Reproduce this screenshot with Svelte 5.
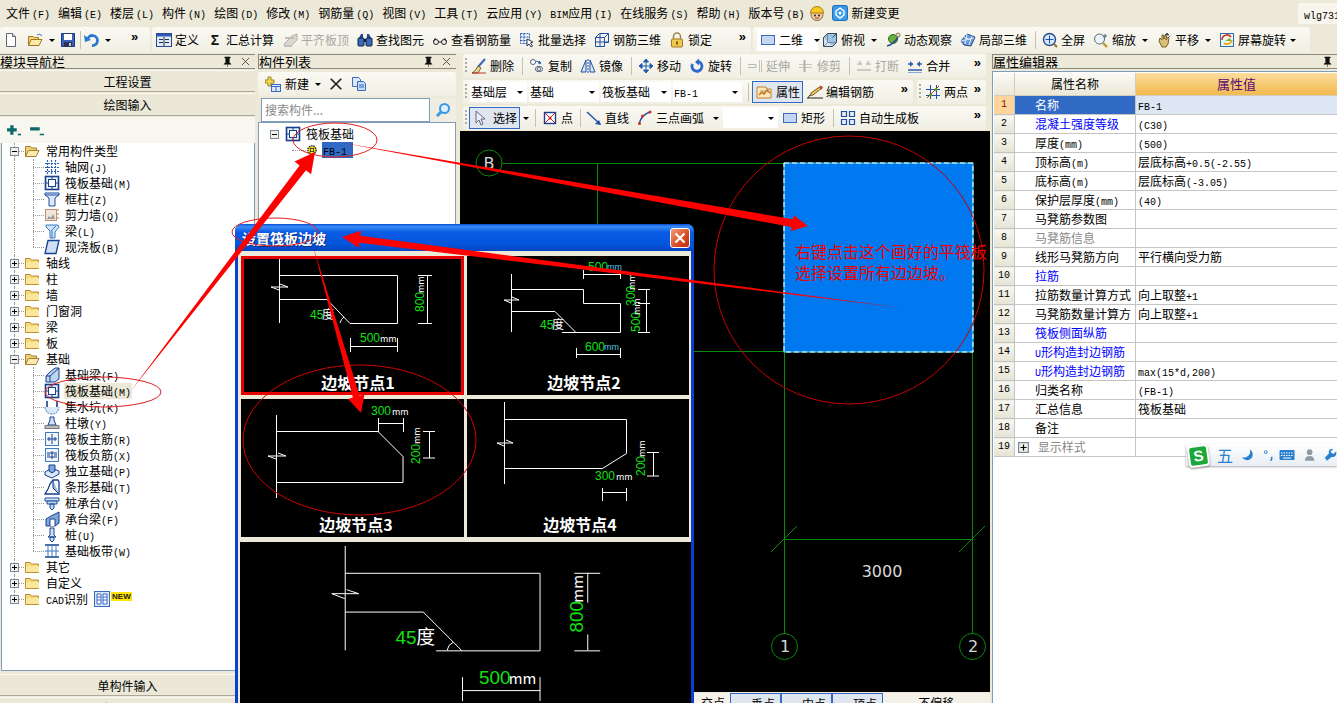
<script>
  // icones de la barre d'outils et de l'arbre, viewBox 16x16
  const blue = 'stroke="#1b4f9c"';
  const icons = {
    new: `<path d="M3.5 1.5h6l3 3v10h-9z" fill="#fff" stroke="#667"/><path d="M9.5 1.5v3h3" fill="#dde" stroke="#667"/>`,
    open: `<path d="M1.5 13.5v-9h5l1 1h4v2" fill="#f7d774" stroke="#a07820"/><path d="M1.5 13.5l2.5-6h11l-3 6z" fill="#fbe9a6" stroke="#a07820"/><path d="M10 3q3-2 5 1" fill="none" stroke="#3a70c0"/>`,
    save: `<rect x="1.5" y="1.5" width="13" height="13" fill="#3a5fc0" stroke="#223a80"/><rect x="4" y="2" width="8" height="6" fill="#fff"/><rect x="4" y="10" width="8" height="4.5" fill="#2b3350"/><rect x="9" y="11" width="2" height="3" fill="#ccd"/>`,
    undo: `<path d="M4.5 8A5 5 0 1 1 9 13.5" stroke="#2a78d0" stroke-width="2.8" fill="none"/><path d="M1 3l1 7 6-2z" fill="#2a78d0"/>`,
    define: `<rect x=".5" y="1.5" width="15" height="13" fill="#dfe9f7" stroke="#2a4a90"/><rect x="1" y="2" width="14" height="2.5" fill="#2a5ab0"/><path d="M3 7.5h4M3 10.5h4M9 7.5h4M9 10.5h4M8 5v9" stroke="#234"/>`,
    sigma: `<text x="8" y="13" text-anchor="middle" font-size="14" font-weight="bold" font-family="Liberation Sans" fill="#111">Σ</text>`,
    align: `<path d="M2 12l8-8 5-2v6l-6 6H3z" fill="#d8d8d0" stroke="#b0b0a8"/><path d="M3 6h9M2 14h8" stroke="#c0c0b8" stroke-width="2"/>`,
    binoc: `<path d="M2 6l2-4h2v4zM14 6l-2-4h-2v4z" fill="#20489a"/><rect x="1" y="6" width="6" height="8" rx="1" fill="#3a6ac0" stroke="#123"/><rect x="9" y="6" width="6" height="8" rx="1" fill="#3a6ac0" stroke="#123"/><rect x="7" y="7" width="2" height="3" fill="#123"/>`,
    glass: `<circle cx="4" cy="10" r="2.5" fill="#eee" stroke="#222"/><circle cx="12" cy="10" r="2.5" fill="#eee" stroke="#222"/><path d="M6.5 10h3M1.5 9l2-3M14.5 9l-2-3" stroke="#222" fill="none"/>`,
    batch: `<path d="M1.5 1.5h9v10h-9zM1.5 5h9M1.5 8.5h9M5 1.5v10" fill="#eef3fb" stroke="#2a5fb0" stroke-dasharray="2 1"/><path d="M8 7l6 3-2.5 1 2 3-1.5 1-2-3-2 2z" fill="#fff" stroke="#335"/>`,
    r3d: `<path d="M1.5 5.5h9v9h-9zM5.5 1.5h9v9h-4M1.5 5.5l4-4M10.5 5.5l4-4M6 1.5v13M1.5 10h13" fill="none" stroke="#1f4fa8"/>`,
    lock: `<path d="M4.5 7V4.5a3.5 3.5 0 0 1 7 0V7" fill="none" stroke="#9a8a50" stroke-width="1.5"/><rect x="2.5" y="7" width="11" height="8" rx="1" fill="#f0c850" stroke="#a07820"/><rect x="7" y="9.5" width="2" height="3" fill="#7a5a10"/>`,
    box2d: `<rect x="1.5" y="3.5" width="13" height="9" fill="#c4d6f4" stroke="#3a6ac0"/>`,
    cube: `<path d="M1.5 5.5h9v9h-9z" fill="#d4e8f6" stroke="#345"/><path d="M1.5 5.5l4-4h9v9l-4 4M10.5 5.5l4-4" fill="#9cc4e4" stroke="#345"/><path d="M1.5 14.5l4-4h9M5.5 1.5v9" fill="none" stroke="#789"/>`,
    orbit: `<circle cx="8" cy="7" r="4.5" fill="#6ab040" stroke="#2e6a1c"/><path d="M2 14q4-1 6-3 4-3 6-8" fill="none" stroke="#2a4a90" stroke-width="1.6"/><circle cx="13" cy="3" r="2" fill="#e9e3b0" stroke="#876"/>`,
    gem: `<path d="M1 9l6-7 8 3-4 9-7-1z" fill="#6a9ad8" stroke="#274a8c"/><path d="M4 5l7 3M7 2l-2 10M12 4L9 13M1 9l13-3" fill="none" stroke="#dce8f8"/>`,
    zoomall: `<circle cx="7.5" cy="7.5" r="6" fill="#dbe8f8" stroke="#234a8a" stroke-width="1.4"/><path d="M7.5 3.5v8M3.5 7.5h8" stroke="#1b4fc0"/><path d="M12 12l3 3" stroke="#987020" stroke-width="2"/>`,
    zoom: `<circle cx="6.5" cy="7" r="5" fill="#eef4fb" stroke="#567"/><path d="M10 11l4 4" stroke="#c09830" stroke-width="2.4"/><path d="M12 2v4M10 4h4" stroke="#467"/>`,
    pan: `<path d="M3 9l1-3 2 2V3l1.500 0 .5 4 1-4 1.500.5L10 8l2-3 1 1-1 6-2 3H6z" fill="#d8c078" stroke="#7a6020"/><path d="M11 1l2 2h-4zM14 4l-2 2" fill="#456" stroke="#456"/>`,
    spin: `<rect x="1.500" y="1.500" width="13" height="13" fill="#ecf6ea" stroke="#2a70b0"/><path d="M3 8a5 5 0 0 1 9-3" fill="none" stroke="#e03020" stroke-width="1.6"/><path d="M13 8a5 5 0 0 1-8 3" fill="none" stroke="#f0a020" stroke-width="1.6"/><path d="M6 9l5-3 1 3z" fill="#6ab040"/>`,
    broom: `<path d="M14 1L7 9" stroke="#3a6ac0" stroke-width="2"/><path d="M7 8l3 2-3 5H1q4-2 6-7z" fill="#e8d898" stroke="#7a6020"/><path d="M1 15h14" stroke="#c03020"/>`,
    copy: `<circle cx="4" cy="4" r="2.500" fill="#fff" stroke="#567"/><circle cx="11" cy="11" r="2.500" fill="#fff" stroke="#567"/><circle cx="9" cy="11" r="2.500" fill="none" stroke="#567"/><path d="M7 3l5 2M12 5l-2-2v3z" stroke="#2a5fb0" fill="#2a5fb0"/>`,
    mirror: `<path d="M6 2v12H1zM10 2v12h5z" fill="#dbe8f8" stroke="#1f4fa8"/><path d="M8 1v14" stroke="#1f4fa8" stroke-dasharray="2 1"/>`,
    move: `<path d="M8 1l2.500 3h-5zM8 15l2.500-3h-5zM1 8l3-2.500v5zM15 8l-3-2.500v5zM8 4v8M4 8h8" fill="#1f5fb0" stroke="#1f5fb0"/>`,
    rot: `<path d="M3.500 6a5 5 0 1 0 6-2.500" fill="none" stroke="#2a6ad0" stroke-width="2.800"/><path d="M10 .5v7l-4-3.500z" fill="#2a6ad0"/>`,
    ext: `<path d="M1 6.500h8M1 9.500h8M9 6.500v3" fill="none" stroke="#b8b8b0"/><path d="M12.500 2v12M14.500 2v12" stroke="#c4c4bc"/>`,
    trim: `<path d="M1 6.500h13M1 9.500h13" fill="none" stroke="#c4c4bc"/><path d="M6.500 2v12" stroke="#b0b0a8" stroke-width="2"/>`,
    brk: `<path d="M1 6h5M10 6h5M1 12h14M3 3l2 2M13 3l-2 2" stroke="#c0c0b8" stroke-width="1.400" fill="none"/>`,
    merge: `<path d="M1 6h5M10 6h5M1 12h14" stroke="#2a5fb0" stroke-width="1.400"/><path d="M6 6L3 3v6zM10 6l3-3v6z" fill="#2a5fb0"/><path d="M1 14.500h14" stroke="#8aa8d8"/>`,
    attr: `<path d="M1 3h9l1 2h4v9H1z" fill="#f9e9bc" stroke="#c08030"/><path d="M3 11l3-3 2 2 3-4 3 3" fill="none" stroke="#d07010" stroke-width="1.500"/><path d="M4 7h9" stroke="#a8a070"/>`,
    pen: `<path d="M14 2l1.500 1.500L6 11l-2.500.5L4 9z" fill="#f0c860" stroke="#7a5a20"/><path d="M13 3l2 2" stroke="#d04030" stroke-width="2"/><path d="M0 14h16M3 11l-2 3" stroke="#222"/>`,
    two: `<path d="M1 5.500h14M1 11.500h14M5.500 1v14M11.500 1v14" stroke="#1f4fa8" fill="none"/><path d="M2 14L14 2" stroke="#d03020"/><circle cx="5.500" cy="11" r="1.600" fill="#5a9a20"/><circle cx="11" cy="5.500" r="1.600" fill="#5a9a20"/>`,
    cursor: `<path d="M3 1v12l3-3 2 5 2-1-2-5h4z" fill="#e8eef8" stroke="#667"/>`,
    point: `<rect x="2.500" y="2.500" width="11" height="11" fill="#fff" stroke="#1b3f90" stroke-width="1.400"/><path d="M3 3l10 10M13 3L3 13" stroke="#d02020"/><circle cx="8" cy="8" r="1.500" fill="#d02020"/>`,
    line: `<path d="M1 2l13 12" stroke="#1f4fa8" stroke-width="1.400"/><path d="M15 15l-6-1 4-4z" fill="#1f4fa8"/>`,
    arc: `<path d="M2 14Q4 5 13 2" fill="none" stroke="#1f4fa8" stroke-width="1.400"/><circle cx="2.500" cy="13.500" r="1.500" fill="#d03020"/><circle cx="5.500" cy="6" r="1.500" fill="#d03020"/><circle cx="13" cy="2" r="1.500" fill="#d03020"/>`,
    auto: `<path d="M1.500 1.500h5v5h-5zM9.500 1.500h5v5h-5zM1.500 9.500h5v5h-5zM9.500 9.500h5v5h-5z" fill="#e4ecf8" stroke="#1f4fa8" stroke-width="1.200"/>`,
    plusnew: `<path d="M3 1h3v3h3v3H6v3H3V7H0V4h3z" fill="#f5d850" stroke="#9a8a20"/><rect x="6.500" y="8.500" width="9" height="7" fill="#dde8f8" stroke="#3a6ac0"/><path d="M6.500 10.500h9M11 10.500v5" stroke="#3a6ac0"/>`,
    cross: `<path d="M2 2l12 12M14 2L2 14" stroke="#222" stroke-width="2"/>`,
    docs: `<path d="M1.500 1.500h6l2 2v7h-8z" fill="#dde8f8" stroke="#3a6ac0"/><path d="M6.500 5.500h6l2 2v7h-8z" fill="#c8dcf6" stroke="#3a6ac0"/><path d="M8 9h5M8 11h5" stroke="#3a6ac0"/>`,
    find: `<circle cx="9.500" cy="6.500" r="4.500" fill="#dcefff" stroke="#3a98e0" stroke-width="2"/><path d="M6 10l-4 4" stroke="#3a98e0" stroke-width="3"/>`,
    gear: `<circle cx="8" cy="8" r="5.500" fill="#f8f020" stroke="#333" stroke-dasharray="2 1" stroke-width="2"/><path d="M5 6h6M5 10h6M6 5v6M10 5v6" stroke="#222"/>`,
    fold: `<path d="M1.500 13.500v-10h5l1 1.500h7v8.500z" fill="#f8d878" stroke="#b89030"/><path d="M2 7h13v6H2z" fill="#fbe69e"/>`,
    foldo: `<path d="M1.500 13.500v-10h5l1 1.500h5v2" fill="#f0d070" stroke="#a08030"/><path d="M1.500 13.500l3-6H15l-3 6z" fill="#fbeab0" stroke="#a08030"/>`,
    grid: `<path d="M1 4.500h14M1 8.500h14M1 12.500h14M3.500 1v14M7.500 1v14M11.500 1v14" fill="none" stroke="#2a5fb0" stroke-dasharray="2 1" stroke-width="1.200"/>`,
    raft: `<rect x="1.500" y="1.500" width="13" height="13" fill="#eef3fb" stroke="#15408c" stroke-width="1.600"/><rect x="4.500" y="4.500" width="7" height="7" fill="#fff" stroke="#15408c"/><path d="M1 8h3M12 8h3M8 1v3M8 12v3" stroke="#15408c"/>`,
    column: `<path d="M1 2h14v2l-4 3v8H5V7L1 4z" fill="#dbe8f8" ${blue}/><path d="M1 4h14" ${blue}/>`,
    wall: `<rect x="1.500" y="2.500" width="11" height="11" fill="#eee6de" stroke="#c09070"/><path d="M3 12l2-3 2 2 2-4 2 5z" fill="#999"/><path d="M14 2v12" stroke="#d07030" stroke-dasharray="2 2"/>`,
    beam: `<path d="M2 2h12l1 2-4 5v6H6V8L2 4z" fill="#cfe4f8" stroke="#3a7ac0"/><path d="M7 8l5-5M8 15V8" stroke="#3a7ac0"/>`,
    slab: `<path d="M4 1.500h11l-3 13H1z" fill="#cfe0f6" stroke="#15408c" stroke-width="1.300"/>`,
    fbeam: `<path d="M2 15V9l4-4 5-4h4v11l-4 3z" fill="#bcd4f0" stroke="#15408c"/><path d="M6 15V9l9-8M2 9h4" stroke="#15408c" fill="none"/>`,
    pit: `<path d="M3 2v5q0 4 5 4t5-4V2" fill="none" stroke="#15408c" stroke-width="1.600"/><path d="M1 8q1 7 7 7t7-7" fill="#dce8f6" stroke="#3a7ac0" stroke-dasharray="2 1"/>`,
    pier: `<path d="M6 2h4v3l2 5H4l2-5z" fill="#cfe0f6" stroke="#15408c"/><rect x="1" y="10.500" width="14" height="3" fill="#bbb" stroke="#778"/>`,
    rbar: `<rect x="1.500" y="1.500" width="13" height="13" fill="#f2f6fc" stroke="#3a7ac0"/><path d="M3 8h10M8 3v10M5 6v4M11 6v4" stroke="#15408c"/>`,
    nbar: `<rect x="1.500" y="1.500" width="13" height="13" fill="#f2f6fc" stroke="#3a7ac0"/><path d="M3 6h10M3 10h10M8 4v8M3 8h3M10 8h3" stroke="#15408c"/>`,
    iso: `<path d="M1 9l7-4 7 3v3l-7 4-7-3z" fill="#dce8f6" stroke="#15408c"/><path d="M5 2h6v6l-3 2-3-2z" fill="#7ea6d8" stroke="#15408c"/>`,
    strip: `<path d="M1 15l3-5 2-5 3-4h5l1 2v12z" fill="#fff" stroke="#15408c" stroke-width="1.300"/><path d="M9 1v8l6 6" fill="#9cbce4" stroke="#15408c"/>`,
    cap: `<path d="M1 3h14v3H1z" fill="#dbe8f8" ${blue}/><path d="M3 6h10v3H3zM6 9h4v4l-2 2-2-2z" fill="#bcd4f0" ${blue}/>`,
    cbeam: `<path d="M2 15V8l5-3 8-4v11l-4 3z" fill="#7ea6d8" stroke="#15408c"/><path d="M6 15V8h5v7" fill="#fff" stroke="#15408c"/>`,
    pile: `<path d="M6 1h4v7l2 2H4l2-2zM6 10h4v3l-2 2-2-2z" fill="#cfe0f6" stroke="#15408c"/>`,
    band: `<path d="M1 2h14M1 14h14" stroke="#15408c" stroke-width="1.400"/><path d="M4 2v12M8 2v12M12 2v12M1 8h14" stroke="#3a7ac0"/>`,
    cad: `<rect x=".5" y=".5" width="15" height="15" fill="#dbe8f8" stroke="#3a6ac0"/><path d="M3 3h4v10H3zM9 3h4v10H9zM3 6h4M3 9h4M9 6h4M9 9h4" fill="#fff" stroke="#3a6ac0"/>`,
    hat: `<circle cx="8" cy="9.500" r="6" fill="#f3c7a0" stroke="#8a6a40"/><path d="M1.500 8a6.500 6.500 0 0 1 13 0z" fill="#f8c820" stroke="#a88010"/><circle cx="6" cy="10.500" r="1" fill="#222"/><circle cx="10" cy="10.500" r="1" fill="#222"/><path d="M6 13h4" stroke="#a04030"/>`,
    change: `<rect x=".5" y=".5" width="15" height="15" rx="2" fill="#3a9ae8" stroke="#1a70c0"/><path d="M8 3l4 3v4l-4 3-4-3V6z" fill="none" stroke="#fff" stroke-width="1.400"/><circle cx="8" cy="8" r="1.500" fill="#fff"/>`,
  };

  const menu = [['文件', 'F'], ['编辑', 'E'], ['楼层', 'L'], ['构件', 'N'], ['绘图', 'D'], ['修改', 'M'], ['钢筋量', 'Q'], ['视图', 'V'], ['工具', 'T'], ['云应用', 'Y'], ['BIM应用', 'I'], ['在线服务', 'S'], ['帮助', 'H'], ['版本号', 'B']];

  const mainTools = [
    { i: 'define', t: '定义' }, { i: 'sigma', t: '汇总计算' }, { i: 'align', t: '平齐板顶', off: 1 },
    { i: 'binoc', t: '查找图元' }, { i: 'glass', t: '查看钢筋量' }, { i: 'batch', t: '批量选择' },
    { i: 'r3d', t: '钢筋三维' }, { i: 'lock', t: '锁定' },
  ];
  const viewTools = [
    { i: 'cube', t: '俯视', arr: 1 }, { i: 'orbit', t: '动态观察' }, { i: 'gem', t: '局部三维' }, { sep: 1 },
    { i: 'zoomall', t: '全屏' }, { i: 'zoom', t: '缩放', arr: 1 }, { i: 'pan', t: '平移', arr: 1 }, { i: 'spin', t: '屏幕旋转', arr: 2 },
  ];
  const editTools = [
    { i: 'broom', t: '删除' }, { sep: 1 }, { i: 'copy', t: '复制' }, { i: 'mirror', t: '镜像' }, { sep: 1 },
    { i: 'move', t: '移动' }, { i: 'rot', t: '旋转' }, { sep: 1 }, { i: 'ext', t: '延伸', off: 1 }, { i: 'trim', t: '修剪', off: 1 }, { sep: 1 },
    { i: 'brk', t: '打断', off: 1 }, { i: 'merge', t: '合并' },
  ];
  const combos = [['基础层', 57], ['基础', 70], ['筏板基础', 70], ['FB-1', 69]];

  const tree = [
    { t: '常用构件类型', i: 'foldo', open: 1 },
    { t: '轴网(J)', i: 'grid', sub: 1 }, { t: '筏板基础(M)', i: 'raft', sub: 1 }, { t: '框柱(Z)', i: 'column', sub: 1 },
    { t: '剪力墙(Q)', i: 'wall', sub: 1 }, { t: '梁(L)', i: 'beam', sub: 1 }, { t: '现浇板(B)', i: 'slab', sub: 1, end: 1 },
    { t: '轴线', i: 'fold' }, { t: '柱', i: 'fold' }, { t: '墙', i: 'fold' }, { t: '门窗洞', i: 'fold' }, { t: '梁', i: 'fold' }, { t: '板', i: 'fold' },
    { t: '基础', i: 'foldo', open: 1 },
    { t: '基础梁(F)', i: 'fbeam', sub: 1 }, { t: '筏板基础(M)', i: 'raft', sub: 1, sel: 1 }, { t: '集水坑(K)', i: 'pit', sub: 1 },
    { t: '柱墩(Y)', i: 'pier', sub: 1 }, { t: '筏板主筋(R)', i: 'rbar', sub: 1 }, { t: '筏板负筋(X)', i: 'nbar', sub: 1 },
    { t: '独立基础(P)', i: 'iso', sub: 1 }, { t: '条形基础(T)', i: 'strip', sub: 1 }, { t: '桩承台(V)', i: 'cap', sub: 1 },
    { t: '承台梁(F)', i: 'cbeam', sub: 1 }, { t: '桩(U)', i: 'pile', sub: 1 }, { t: '基础板带(W)', i: 'band', sub: 1, end: 1 },
    { t: '其它', i: 'fold' }, { t: '自定义', i: 'fold' }, { t: 'CAD识别', i: 'fold', cad: 1, last: 1 },
  ];

  const props = [
    ['名称', 'FB-1'], ['混凝土强度等级', '(C30)', 'b'], ['厚度(mm)', '(500)'], ['顶标高(m)', '层底标高+0.5(-2.55)'], ['底标高(m)', '层底标高(-3.05)'],
    ['保护层厚度(mm)', '(40)'], ['马凳筋参数图', ''], ['马凳筋信息', '', 'g'], ['线形马凳筋方向', '平行横向受力筋'], ['拉筋', '', 'b'],
    ['拉筋数量计算方式', '向上取整+1'], ['马凳筋数量计算方', '向上取整+1'], ['筏板侧面纵筋', '', 'b'], ['U形构造封边钢筋', '', 'b'],
    ['U形构造封边钢筋', 'max(15*d,200)', 'b'], ['归类名称', '(FB-1)'], ['汇总信息', '筏板基础'], ['备注', ''], ['显示样式', '', 'g'],
  ];

  // decoupe un libelle : les caracteres latins sont plus petits, comme dans l'original
  function runs(s) {
    return s.split(/([\x00-\x7f]+)/).filter(Boolean).map((p) => ({ s: p, lat: /^[\x00-\x7f]/.test(p) }));
  }

  // fleche rouge effilee, du point fin vers la pointe
  function arrow(x0, y0, x1, y1, w, hl, hw) {
    const len = Math.hypot(x1 - x0, y1 - y0);
    const ux = (x1 - x0) / len, uy = (y1 - y0) / len, nx = -uy, ny = ux;
    const bx = x1 - ux * hl, by = y1 - uy * hl;
    const pts = [
      [x0, y0], [bx + nx * w / 2, by + ny * w / 2], [bx + nx * hw / 2, by + ny * hw / 2], [x1, y1],
      [bx - nx * hw / 2, by - ny * hw / 2], [bx - nx * w / 2, by - ny * w / 2],
    ];
    return pts.map((p) => p[0].toFixed(1) + ',' + p[1].toFixed(1)).join(' ');
  }
  const arrows = [
    arrow(130, 392, 315, 152, 8, 20, 21),
    arrow(338, 142, 808, 226, 8, 16, 16),
    arrow(903, 308, 342, 237, 7, 18, 17),
    arrow(313, 246, 361, 413, 7, 17, 17),
  ];
</script>

{#snippet txt(s)}{#each runs(s) as p}{#if p.lat}<span class="lat">{p.s}</span>{:else}{p.s}{/if}{/each}{/snippet}

{#snippet icon(name)}
  <svg class="ic" viewBox="0 0 16 16">{@html icons[name]}</svg>
{/snippet}

{#snippet tool(it)}
  {#if it.sep}
    <i class="sep"></i>
  {:else}
    <div class="tool" class:off={it.off}>
      {@render icon(it.i)}
      <span>{it.t}</span>
      {#if it.arr}<i class="arr" class:near={it.arr === 2}></i>{/if}
    </div>
  {/if}
{/snippet}

{#snippet title(name)}
  <div class="title">
    <span>{name}</span>
    <svg class="pin" viewBox="0 0 10 12"><path d="M2 1h6v1H7v5l2 2H1l2-2V2H2zM5 9v3" fill="#111" stroke="#111" stroke-width=".6" /></svg>
    <svg class="x" viewBox="0 0 10 10"><path d="M1 1l8 8M9 1L1 9" stroke="#444" /></svg>
  </div>
{/snippet}

{#snippet toggle(open)}
  <svg class="tog" viewBox="0 0 9 9">
    <rect x=".5" y=".5" width="8" height="8" fill="#f2f0e6" stroke="#7b8a9a" />
    <path d={open ? 'M2 4.500h5' : 'M2 4.500h5M4.500 2v5'} stroke="#000" />
  </svg>
{/snippet}

<div class="app">
  <div class="menubar">
    {#each menu as m}
      <div class="menu">{@render txt(m[0])}<span class="lat key">({m[1]})</span></div>
    {/each}
    <svg class="ic hat" viewBox="0 0 16 16">{@html icons.hat}</svg>
    <svg class="ic chg" viewBox="0 0 16 16">{@html icons.change}</svg>
    <span class="chg-t">新建变更</span>
    <div class="user"><span class="lat">wlg731</span></div>
  </div>

  <div class="tb1">
    <div class="band b1">
      {@render icon('new')}
      {@render icon('open')}
      <i class="arr a-open"></i>
      {@render icon('save')}
      <i class="sep s-save"></i>
      {@render icon('undo')}
      <i class="arr a-undo"></i>
      <b class="more m1">»</b>
    </div>
    <div class="band b2">
      {#each mainTools as it}{@render tool(it)}{/each}
      <b class="more">»</b>
    </div>
    <div class="band b3">
      <div class="view2d">
        {@render icon('box2d')}
        <span>二维</span>
        <i class="arr"></i>
      </div>
      {#each viewTools as it}{@render tool(it)}{/each}
    </div>
  </div>

  <div class="main">
    <aside class="nav">
      {@render title('模块导航栏')}
      <div class="navbtn first">工程设置</div>
      <div class="navbtn">绘图输入</div>
      <div class="treetools">
        <svg viewBox="0 0 14 10" class="tt"><path d="M4 0h3v3h3v3H7v3H4V6H1V3h3z" fill="#0a6a6a" /><path d="M11 8h3v1.500h-3z" fill="#0a6a6a" /></svg>
        <svg viewBox="0 0 14 10" class="tt"><path d="M1 2h9v3H1zM10 8h4v1.500h-4z" fill="#0a6a6a" /></svg>
      </div>
      <div class="tree">
        {#each tree as r}
          <div class="row" class:sub={r.sub} class:end={r.end} class:last={r.last}>
            {#if !r.sub}
              {@render toggle(r.open)}
              <i class="dots d0"></i>
            {:else}
              <i class="dots d1"></i>
            {/if}
            <svg class="ic ti" viewBox="0 0 16 16">{@html icons[r.i]}</svg>
            <span class="rt" class:sel={r.sel}>{@render txt(r.t)}</span>
            {#if r.cad}
              <svg class="ic cadic" viewBox="0 0 16 16">{@html icons.cad}</svg>
              <b class="newtag">NEW</b>
            {/if}
          </div>
        {/each}
      </div>
      <div class="navbtn low">单构件输入</div>
      <div class="navbtn low">报表预览</div>
    </aside>

    <section class="list">
      {@render title('构件列表')}
      <div class="band listbar">
        {@render icon('plusnew')}
        <span class="lb-new">新建</span>
        <i class="arr"></i>
        <svg class="ic lb-x" viewBox="0 0 16 16">{@html icons.cross}</svg>
        <svg class="ic lb-c" viewBox="0 0 16 16">{@html icons.docs}</svg>
      </div>
      <div class="search">
        <div class="s-in">搜索构件...</div>
        <div class="s-btn">{@render icon('find')}</div>
      </div>
      <div class="ltree">
        <div class="lrow">
          {@render toggle(true)}
          <svg class="ic lt-f" viewBox="0 0 16 16">{@html icons.raft}</svg>
          <span class="lt-t">筏板基础</span>
        </div>
        <div class="lrow two">
          <i class="dots d2"></i>
          <svg class="ic lt-g" viewBox="0 0 16 16">{@html icons.gear}</svg>
          <span class="lt-s"><span class="lat">FB-1</span></span>
        </div>
      </div>
    </section>

    <section class="work">
      <div class="band wr">
        <i class="grip"></i>
        {#each editTools as it}{@render tool(it)}{/each}
        <b class="more right">»</b>
      </div>
      <div class="wrs">
        <div class="band wr w1">
          <i class="grip"></i>
          {#each combos as c}
            <div class="combo" style="width:{c[1]}px">
              <span class="combo-t">{@render txt(c[0])}</span>
              <i class="arr"></i>
            </div>
          {/each}
          <i class="sep s-combo"></i>
          <div class="tool hot">{@render icon('attr')}<span>属性</span></div>
          <div class="tool">{@render icon('pen')}<span>编辑钢筋</span></div>
          <b class="more right">»</b>
        </div>
        <div class="band wr w2">
          <i class="grip"></i>
          <div class="tool">{@render icon('two')}<span>两点</span></div>
          <b class="more right">»</b>
        </div>
      </div>
      <div class="band wr">
        <i class="grip"></i>
        <div class="tool hot sel-t">{@render icon('cursor')}<span>选择</span></div>
        <i class="arr a-sel"></i>
        <i class="sep s-sel"></i>
        <div class="tool">{@render icon('point')}<span>点</span></div>
        <i class="sep s-pt"></i>
        <div class="tool">{@render icon('line')}<span>直线</span></div>
        <div class="tool">{@render icon('arc')}<span>三点画弧</span><i class="arr"></i></div>
        <div class="combo c-blank"><span class="combo-t"></span><i class="arr"></i></div>
        <div class="tool">{@render icon('box2d')}<span>矩形</span></div>
        <i class="sep"></i>
        <div class="tool">{@render icon('auto')}<span>自动生成板</span></div>
        <b class="more right">»</b>
      </div>

      <div class="canvas">
        <svg viewBox="460 131 530 561" width="530" height="561">
          <g fill="none" stroke="#0a8a0a">
            <path d="M502 163.500H784M597.500 163V420M600 351.500H784M784.500 352V634M972.500 352V634M784 539.500H973M771 552l26-26M959 552l26-26" />
            <circle cx="489" cy="163" r="13" />
            <circle cx="784.500" cy="646.500" r="13" />
            <circle cx="972.500" cy="646.500" r="13" />
          </g>
          <rect x="784" y="163" width="189" height="189" fill="#0078f0" stroke="#40e0ff" />
          <rect x="784" y="163" width="189" height="189" fill="none" stroke="#fff" stroke-dasharray="5 3" />
          <g class="axis">
            <text x="489" y="169">B</text>
            <text x="785" y="652">1</text>
            <text x="973" y="652">2</text>
            <text x="882" y="577">3000</text>
          </g>
        </svg>
      </div>
      <div class="snapbar">
        <span class="sb-a">交点</span>
        <span class="sb-b">垂点</span>
        <span class="sb-b">中点</span>
        <span class="sb-b">顶点</span>
        <b class="more sb-m">»</b>
        <span class="sb-o">不偏移</span>
        <b class="more sb-m2">»</b>
      </div>
    </section>

    <section class="props">
      {@render title('属性编辑器')}
      <div class="pwrap">
        <table>
          <thead>
            <tr><th class="n"></th><th class="h">属性名称</th><th class="v">属性值</th></tr>
          </thead>
          <tbody>
            {#each props as p, i}
              <tr class:cur={i === 0}>
                <td class="n">{i + 1}</td>
                <td class="pn" class:blue={p[2] === 'b'} class:grey={p[2] === 'g'}>
                  {#if i === 18}<span class="plus">{@render toggle(false)}</span>{/if}
                  {@render txt(p[0])}
                </td>
                <td class="pv">{@render txt(p[1])}</td>
              </tr>
            {/each}
          </tbody>
        </table>
      </div>
    </section>
  </div>

  <div class="dialog">
    <div class="dlg-t">
      <span>设置筏板边坡</span>
      <div class="dlg-x"><svg viewBox="0 0 12 12"><path d="M1.500 1.500l9 9M10.500 1.500l-9 9" stroke="#fff" stroke-width="2.200" /></svg></div>
    </div>
    <div class="dlg-b">
      <div class="thumb picked">
        <svg viewBox="241 256 223 139">
          <path class="wl" d="M279.500 257V323M279.500 275.500H397.500V323.500H350M279.500 299.500H327L350 323.500M271 287h17l-8-3M271 287l8 3M340 323q1-4 4-6" />
          <path class="wl" d="M427.500 275.500V323.500M418 275.500h14M418 323.500h14M350.500 338v14M397.500 338v14M350.500 346.500H397.500" />
          <text class="g f12" x="310" y="319">45</text><text class="w f12" x="322" y="319">度</text>
          <text class="g f12" x="360" y="342">500</text><text class="w f10" x="380" y="342">mm</text>
          <text class="g f12" transform="rotate(-90 424 312)" x="424" y="312">800</text>
          <text class="w f10" transform="rotate(-90 424 293)" x="424" y="293">mm</text>
          <text class="cap" x="358" y="389">边坡节点1</text>
        </svg>
      </div>
      <div class="thumb">
        <svg viewBox="467 256 222 139">
          <path class="wl" d="M511.500 274V332M511.500 289.500H583.500V303.500H620.500V332.500H562M511.500 311.500H555L576 332.500M504 300h15l-7-3M504 300l7 3" />
          <path class="wl" d="M583.500 270v9M620.500 270v9M583.500 274.500H620.500M646.500 289.500V332.500M638 289.500h12M638 303.500h12M638 332.500h12M576.500 348v10M620.500 348v10M576.500 354.500H620.500" />
          <text class="g f12" x="588" y="271">500</text><text class="mm f10" x="607" y="270">mm</text>
          <text class="g f12" transform="rotate(-90 635 306)" x="635" y="306">300</text>
          <text class="w f10" transform="rotate(-90 635 290)" x="635" y="290">mm</text>
          <text class="g f12" transform="rotate(-90 640 332)" x="640" y="332">500</text>
          <text class="w f10" transform="rotate(-90 640 315)" x="640" y="315">mm</text>
          <text class="g f12" x="585" y="351">600</text><text class="mm f10" x="604" y="350">mm</text>
          <text class="g f12" x="540" y="329">45</text><text class="w f12" x="552" y="329">度</text>
          <text class="cap" x="584" y="389">边坡节点2</text>
        </svg>
      </div>
      <div class="thumb">
        <svg viewBox="241 399 223 138">
          <path class="wl" d="M276.500 415V498M276.500 431.500H378L403 456.500V482.500H276.500M268 456h18l-8-3M268 456l8 3" />
          <path class="wl" d="M378.500 418v14M403.500 418v14M378.500 423.500H403.500M429.500 431.500V458M423 431.500h12M423 458h12" />
          <text class="g f12" x="371" y="415">300</text><text class="w f10" x="392" y="415">mm</text>
          <text class="g f12" transform="rotate(-90 420 464)" x="420" y="464">200</text>
          <text class="w f10" transform="rotate(-90 420 444)" x="420" y="444">mm</text>
          <text class="cap" x="356" y="531">边坡节点3</text>
        </svg>
      </div>
      <div class="thumb">
        <svg viewBox="467 399 222 138">
          <path class="wl" d="M504.500 402V484M504.500 419.500H626.500V453.500L602.500 468.500H504.500M497 443h16l-7-3M497 443l7 3" />
          <path class="wl" d="M653.500 452V476M647 452.500h12M647 476h12M602.500 488v13M626.500 488v13M602.500 492.500H626.500" />
          <text class="g f12" x="595" y="480">300</text><text class="w f10" x="616" y="480">mm</text>
          <text class="g f12" transform="rotate(-90 645 476)" x="645" y="476">200</text>
          <text class="w f10" transform="rotate(-90 645 457)" x="645" y="457">mm</text>
          <text class="cap" x="580" y="531">边坡节点4</text>
        </svg>
      </div>
      <div class="thumb big">
        <svg viewBox="240 542 451 165">
          <path class="wl" d="M344.500 546V651M344.500 573.500H540.500V651.500H436M344.500 612.500H423L462 651.500M331 594h27l-12-4M331 594l13 5M447 651q1-6 6-8" />
          <path class="wl" d="M588.500 573V603M588.500 635V651M575 573.500h26M575 651.500h26M462.500 678v24M540.500 678v24M462.500 691.500H540.500" />
          <text class="g f18" x="395" y="645">45</text><text class="w f18" x="416" y="645">度</text>
          <text class="g f18" x="479" y="685">500</text><text class="w f14" x="509" y="685">mm</text>
          <text class="g f18" transform="rotate(-90 584 633)" x="584" y="633">800</text>
          <text class="w f14" transform="rotate(-90 584 603)" x="584" y="603">mm</text>
        </svg>
      </div>
    </div>
  </div>

  <!-- annotations rouges posees sur la capture -->
  <svg class="marks" viewBox="0 0 1337 703" width="1337" height="703">
    <g fill="none" stroke="#e02020">
      <ellipse cx="103" cy="392" rx="58" ry="15" />
      <ellipse cx="335" cy="140" rx="42" ry="17" />
      <ellipse cx="275" cy="232" rx="43" ry="14" />
      <ellipse cx="359.500" cy="440" rx="116.500" ry="75" stroke="#d00000" />
      <ellipse cx="849" cy="270" rx="135" ry="134" stroke="#c80000" />
    </g>
    {#each arrows as pts}
      <polygon points={pts} fill="#ff0000" />
    {/each}
    <text class="note" x="795" y="258">右键点击这个画好的平筏板</text>
    <text class="note" x="795" y="279">选择设置所有边边坡。</text>
  </svg>

  <div class="ime">
    <div class="ime-s">S</div>
    <span class="ime-w">五</span>
    <svg viewBox="0 0 14 14" class="ime-i"><path d="M9 1a6 6 0 1 1-8 8 6 6 0 0 0 8-8z" fill="#2a80d0" /></svg>
    <svg viewBox="0 0 14 14" class="ime-i"><circle cx="4" cy="4" r="1.500" fill="none" stroke="#2a80d0" /><path d="M10 9q1 2-1 4" fill="none" stroke="#2a80d0" stroke-width="1.600" /></svg>
    <svg viewBox="0 0 16 14" class="ime-k"><rect x=".5" y="2" width="15" height="10" rx="1" fill="#2a80d0" /><path d="M2 5h12M2 7.500h12" stroke="#fff" stroke-dasharray="1.500 1" /><path d="M4 10h8" stroke="#fff" /></svg>
    <svg viewBox="0 0 14 14" class="ime-i"><circle cx="7" cy="4" r="3" fill="#909aa4" /><path d="M2 13q0-5 5-5t5 5z" fill="#909aa4" /></svg>
    <svg viewBox="0 0 14 14" class="ime-i"><path d="M13 3l-3 3-2-1-1-2 3-2q-4-1-5 2 0 1 .5 2L1 10l2 3 5-4q4 1 5-3z" fill="#2a80d0" /></svg>
  </div>
</div>

<style>
  :global(body) {
    margin: 0;
  }

  .app {
    position: relative;
    width: 1337px;
    height: 703px;
    overflow: hidden;
    background: #ece9d8;
    color: #000;
    font: 12px/16px "Noto Sans CJK SC", "Liberation Sans", sans-serif;
  }

  .lat {
    font-family: "Liberation Mono", monospace;
    font-size: 10px;
    line-height: 0;
  }

  .ic {
    display: block;
    flex: none;
    width: 16px;
    height: 16px;
  }

  /* menu */
  .menubar {
    display: flex;
    align-items: center;
    height: 26px;
    padding-left: 2px;
  }
  .menu {
    padding: 0 4px;
    white-space: nowrap;
  }
  .key {
    margin-left: 2px;
  }
  .hat {
    margin-left: 1px;
  }
  .chg {
    margin-left: 7px;
  }
  .chg-t {
    margin-left: 3px;
  }
  .user {
    margin-left: auto;
    width: 33px;
    height: 20px;
    padding: 1px 0 0 6px;
    border-radius: 3px 0 0 3px;
    background: #f7f5ec;
    overflow: hidden;
    white-space: nowrap;
    line-height: 19px;
  }

  /* barres d'outils */
  .band {
    display: flex;
    align-items: center;
    background: linear-gradient(#faf9f3, #f1efe3);
    border-radius: 3px;
  }
  .tb1 {
    display: flex;
    height: 26px;
    margin: 1px 0;
  }
  .b1 {
    flex: none;
    width: 150px;
    padding-left: 3px;
    box-sizing: border-box;
  }
  .b1 > .ic:nth-child(2) {
    margin-left: 8px;
  }
  .a-open {
    margin: 0 5px 0 5px;
  }
  .s-save {
    margin: 0 5px;
  }
  .a-undo {
    margin: 0 0 0 6px;
  }
  .m1 {
    margin-left: 20px;
  }
  .b2 {
    flex: none;
    width: 599px;
    margin-left: 2px;
    box-sizing: border-box;
    padding-right: 5px;
  }
  .b2 .more {
    margin-left: auto;
  }
  .b3 {
    flex: none;
    width: 557px;
    margin-left: 2px;
    padding-left: 4px;
    box-sizing: border-box;
  }
  .view2d {
    flex: none;
    display: flex;
    align-items: center;
    gap: 3px;
    width: 61px;
    height: 22px;
    padding-left: 3px;
    box-sizing: border-box;
    background: #fff;
    white-space: nowrap;
  }
  .tool {
    flex: none;
    display: flex;
    align-items: center;
    gap: 3px;
    height: 22px;
    padding: 0 4px;
    white-space: nowrap;
  }
  .tool.off {
    color: #a8a8a0;
  }
  .tool.hot {
    margin: 0 0 0 2px;
    box-sizing: border-box;
    width: 51px;
    padding: 0 3px;
    border: 1px solid #316ac5;
    background: #e0e6f0;
    gap: 4px;
  }
  .sep {
    flex: none;
    width: 1px;
    height: 18px;
    margin: 0 2px 0 4px;
    background: #c5c2b2;
  }
  .arr {
    flex: none;
    width: 0;
    height: 0;
    margin-left: 6px;
    border: 3px solid transparent;
    border-top: 3px solid #000;
    border-bottom: 0;
  }
  .arr.near {
    margin-left: 2px;
  }
  .b3 .arr {
    margin-left: 3px;
  }
  .b3 .view2d .arr {
    margin-left: 8px;
  }
  .b3 .arr.near {
    margin-left: 1px;
  }
  .more {
    font: bold 13px/12px "Liberation Sans", sans-serif;
    margin-top: -6px;
  }
  .more.right {
    margin-left: auto;
    margin-right: 5px;
  }

  /* panneaux */
  .main {
    display: flex;
    height: 649px;
    overflow: hidden;
  }
  .title {
    display: flex;
    align-items: center;
    height: 13px;
    border: 1px solid #8a8a80;
    border-width: 1px 0 1px 1px;
    font-size: 13px;
    overflow: hidden;
    white-space: nowrap;
  }
  .nav .title {
    border-left: 0;
  }
  .pin {
    margin-left: auto;
    width: 9px;
    height: 11px;
  }
  .x {
    width: 9px;
    height: 9px;
    margin: 0 5px 0 9px;
  }

  .nav {
    flex: none;
    width: 255px;
    height: 665px;
    display: flex;
    flex-direction: column;
  }
  .navbtn {
    flex: none;
    height: 21px;
    margin-bottom: 1px;
    text-align: center;
    line-height: 21px;
    background: #ebe8d8;
    border-top: 1px solid #fbfaf4;
    border-bottom: 1px solid #aca99a;
  }
  .navbtn.first {
    margin-top: 1px;
    height: 20px;
  }
  .navbtn.low {
    margin-top: 1px;
    margin-bottom: 0;
    height: 20px;
  }
  .treetools {
    flex: none;
    display: flex;
    align-items: center;
    gap: 8px;
    height: 26px;
    padding-left: 6px;
    background: #f7f6ef;
  }
  .tt {
    width: 15px;
    height: 11px;
  }
  .tree {
    flex: 1;
    min-height: 0;
    background: #fff;
    border: 1px solid #7f9db9;
    border-top: 0;
    margin: 0 0 2px 1px;
  }
  .row {
    position: relative;
    display: flex;
    align-items: center;
    height: 16px;
    padding-left: 8px;
    white-space: nowrap;
  }
  /* traits pointilles de l'arbre */
  .row::before {
    content: "";
    position: absolute;
    left: 12px;
    top: 0;
    bottom: 0;
    border-left: 1px dotted #999;
  }
  .row.last::before {
    bottom: 8px;
  }
  .row.sub::after {
    content: "";
    position: absolute;
    left: 31px;
    top: 0;
    bottom: 0;
    border-left: 1px dotted #999;
  }
  .row.sub.end::after {
    bottom: 8px;
  }
  .tog {
    position: relative;
    z-index: 1;
    flex: none;
    width: 9px;
    height: 9px;
  }
  .dots {
    flex: none;
    border-top: 1px dotted #999;
  }
  .d0 {
    width: 5px;
  }
  .d1 {
    width: 11px;
    margin-left: 23px;
  }
  .ti {
    margin-right: 5px;
  }
  .row.sub .ti {
    margin-right: 4px;
  }
  .rt {
    padding: 0 1px;
    height: 16px;
    line-height: 16px;
  }
  .rt.sel {
    background: #ece9d8;
  }
  .cadic {
    margin-left: 5px;
  }
  .newtag {
    margin: -6px 0 0 1px;
    padding: 0 1px;
    height: 9px;
    font: bold 8px/9px "Liberation Sans", sans-serif;
    background: #ffe400;
    color: #222;
  }

  .list {
    flex: none;
    width: 198px;
    margin-left: 3px;
  }
  .listbar {
    height: 24px;
    margin-top: 3px;
    padding-left: 7px;
  }
  .lb-new {
    margin-left: 4px;
  }
  .lb-x {
    margin-left: 8px;
    width: 14px;
    height: 14px;
  }
  .lb-c {
    margin-left: 8px;
  }
  .search {
    display: flex;
    height: 24px;
    margin-top: 2px;
  }
  .s-in {
    width: 169px;
    margin-left: 3px;
    box-sizing: border-box;
    padding-left: 3px;
    border: 1px solid #7f9db9;
    background: #fff;
    color: #8a8a8a;
    line-height: 21px;
  }
  .s-btn {
    flex: 1;
    display: flex;
    align-items: center;
    justify-content: center;
    background: #f0eee2;
  }
  .ltree {
    height: 400px;
    padding-top: 3px;
    background: #fff;
    border: 1px solid #7f9db9;
  }
  .lrow {
    display: flex;
    align-items: center;
    height: 16px;
    padding-left: 11px;
  }
  .lrow.two {
    padding-left: 33px;
  }
  .lt-f {
    margin-left: 6px;
  }
  .lt-t {
    margin-left: 5px;
  }
  .d2 {
    width: 14px;
  }
  .lt-g {
    width: 12px;
    height: 12px;
    margin-right: 4px;
  }
  .lt-s {
    width: 31px;
    height: 16px;
    padding-left: 1px;
    box-sizing: border-box;
    background: #316ac5;
    line-height: 16px;
  }

  .work {
    flex: none;
    width: 530px;
    height: 668px;
    margin-left: 4px;
    display: flex;
    flex-direction: column;
  }
  .wr {
    flex: none;
    height: 24px;
    width: 523px;
    margin: 0 0 2px 3px;
  }
  .wrs {
    flex: none;
    display: flex;
    gap: 4px;
    margin-left: 3px;
  }
  .wrs .wr {
    margin-left: 0;
  }
  .wr.w1 {
    width: 450px;
  }
  .wr.w2 {
    width: 69px;
  }
  .grip {
    flex: none;
    width: 2px;
    height: 16px;
    margin: 0 0 0 2px;
    background: repeating-linear-gradient(#aaa 0 2px, transparent 2px 4px);
  }
  .combo {
    flex: none;
    display: flex;
    align-items: center;
    height: 20px;
    margin-right: 2px;
    background: #fff;
    box-sizing: border-box;
    padding-left: 1px;
  }
  .w1 .grip {
    margin-right: 3px;
  }
  .combo-t {
    flex: 1;
    white-space: nowrap;
  }
  .combo .arr {
    margin: 0 4px 0 0;
  }
  .c-blank {
    width: 55px;
    margin: 0;
  }
  .s-combo {
    margin: 0 1px 0 4px;
  }
  .sel-t {
    margin-left: 1px;
    padding-left: 6px;
  }
  .a-sel {
    margin-left: 3px;
  }
  .s-sel {
    margin: 0 2px 0 6px;
  }
  .s-pt {
    margin: 0 1px 0 3px;
  }
  .canvas {
    flex: none;
    height: 561px;
    margin-top: -1px;
    background: #000;
  }
  .canvas svg {
    display: block;
  }
  .axis text {
    fill: #d8d8d8;
    font: 16px "DejaVu Sans", sans-serif;
    text-anchor: middle;
  }
  .snapbar {
    flex: none;
    display: flex;
    align-items: flex-start;
    height: 22px;
    margin-top: 1px;
    padding-left: 241px;
    background: #f4f2e8;
    line-height: 20px;
  }
  .sb-a {
    width: 29px;
  }
  .sb-b {
    box-sizing: border-box;
    width: 51px;
    height: 20px;
    padding-left: 20px;
    border: 1px solid #316ac5;
    background: #e0e6f0;
  }
  .sb-m {
    margin: 6px 0 0 13px;
  }
  .sb-o {
    margin-left: 15px;
  }
  .sb-m2 {
    margin: 6px 0 0 13px;
  }

  .props {
    flex: none;
    width: 363px;
    margin-left: 2px;
  }
  .pwrap {
    height: 640px;
    margin-top: 2px;
    padding: 1px 0 0 1px;
    border-top: 1px solid #7f9db9;
    border-left: 1px solid #7f9db9;
    background: #fff;
  }
  table {
    width: 344px;
    table-layout: fixed;
    border-collapse: collapse;
  }
  th {
    height: 22px;
    padding: 0;
    font-weight: normal;
    font-size: 12px;
    border-right: 1px solid #d0cdbc;
    border-bottom: 1px solid #d0cdbc;
    background: linear-gradient(#fbfaf5, #ebe8d8);
  }
  th.n {
    width: 20px;
  }
  th.h {
    width: 120px;
  }
  th.v {
    background: linear-gradient(#fbdc9c, #f2b94e);
    color: #5a0a78;
    font-size: 13px;
  }
  td {
    height: 18px;
    padding: 0;
    border-right: 1px solid #c4c4c4;
    border-bottom: 1px solid #c4c4c4;
    overflow: hidden;
    white-space: nowrap;
    line-height: 18px;
  }
  td.n {
    text-align: center;
    font: 10px/18px "Liberation Mono", monospace;
    background: linear-gradient(#f8f7f0, #e6e3d3);
  }
  .pn {
    padding-left: 20px;
  }
  .pv {
    padding-left: 2px;
  }
  .blue {
    color: #0000ff;
  }
  .grey {
    color: #8a8a8a;
  }
  .plus {
    display: inline-block;
    margin-left: -17px;
    margin-right: 6px;
    vertical-align: -1px;
  }
  .plus .tog {
    display: block;
    width: 11px;
    height: 11px;
  }
  tr.cur td.n {
    background: #fdd59a;
    color: #7a1010;
  }
  tr.cur .pn {
    background: #316ac5;
    color: #fff;
  }
  tr.cur .pv {
    background: #dde7f4;
  }

  /* fenetre flottante */
  .dialog {
    position: absolute;
    left: 235px;
    top: 224px;
    width: 459px;
    height: 490px;
    box-sizing: border-box;
    background: #ece9d8;
    border: 3px solid #0a3fd0;
    border-top: 0;
    border-radius: 7px 7px 0 0;
  }
  .dlg-t {
    display: flex;
    align-items: center;
    justify-content: space-between;
    height: 27px;
    margin: 0 -3px;
    padding: 0 4px 0 7px;
    border-radius: 7px 7px 0 0;
    background: linear-gradient(#0a50d8 0, #3a8cf6 10%, #0a5ce6 30%, #0455dc 75%, #0344c0 100%);
    color: #fff;
    font-weight: bold;
    font-size: 14px;
    text-shadow: 1px 1px #0a2a80;
  }
  .dlg-x {
    width: 20px;
    height: 20px;
    box-sizing: border-box;
    padding: 3px;
    border: 1px solid #fff;
    border-radius: 3px;
    background: linear-gradient(135deg, #f0a080, #d84a20 60%, #c03010);
  }
  .dlg-x svg {
    display: block;
  }
  .dlg-b {
    display: grid;
    grid-template-columns: 223px 222px;
    grid-template-rows: 139px 138px 165px;
    gap: 4px 3px;
    padding: 5px 2px 0 3px;
  }
  .thumb {
    background: #000;
  }
  .thumb svg {
    display: block;
    width: 100%;
    height: 100%;
  }
  .picked {
    outline: 3px solid #e80000;
    outline-offset: -3px;
  }
  .big {
    grid-column: 1 / 3;
    margin: 1px -2px 0 -1px;
  }
  .wl {
    fill: none;
    stroke: #fff;
    stroke-width: 1;
  }
  .g {
    fill: #10e010;
    font-family: "Liberation Sans", sans-serif;
  }
  .w {
    fill: #fff;
    font-family: "Noto Sans CJK SC", "Liberation Sans", sans-serif;
  }
  .mm {
    fill: #50c0e0;
    font-family: "Liberation Sans", sans-serif;
  }
  .f10 {
    font-size: 9px;
  }
  .f12 {
    font-size: 12px;
  }
  .f14 {
    font-size: 15px;
  }
  .f18 {
    font-size: 19px;
  }
  .cap {
    fill: #fff;
    font: bold 16px "Noto Sans CJK SC", sans-serif;
    text-anchor: middle;
  }

  .marks {
    position: absolute;
    left: 0;
    top: 0;
    pointer-events: none;
  }
  .note {
    fill: #f00000;
    font: 16px "Noto Sans CJK SC", sans-serif;
  }

  .ime {
    position: absolute;
    right: 0;
    top: 444px;
    display: flex;
    align-items: center;
    gap: 8px;
    width: 151px;
    height: 22px;
    box-sizing: border-box;
    padding-left: 2px;
    background: linear-gradient(#ffffff, #e8eef4);
    box-shadow: 0 1px 2px #aaa;
  }
  .ime-s {
    width: 18px;
    height: 18px;
    margin-top: 2px;
    border: 2px solid #fff;
    border-radius: 4px;
    background: #1aa83a;
    color: #fff;
    font: bold 15px/18px "Liberation Sans", sans-serif;
    text-align: center;
    transform: rotate(-8deg);
    box-shadow: 0 1px 2px #888;
  }
  .ime-w {
    font-size: 16px;
    color: #2a80d0;
  }
  .ime-i {
    width: 14px;
    height: 14px;
  }
  .ime-k {
    width: 17px;
    height: 14px;
    margin-left: -5px;
  }
</style>
